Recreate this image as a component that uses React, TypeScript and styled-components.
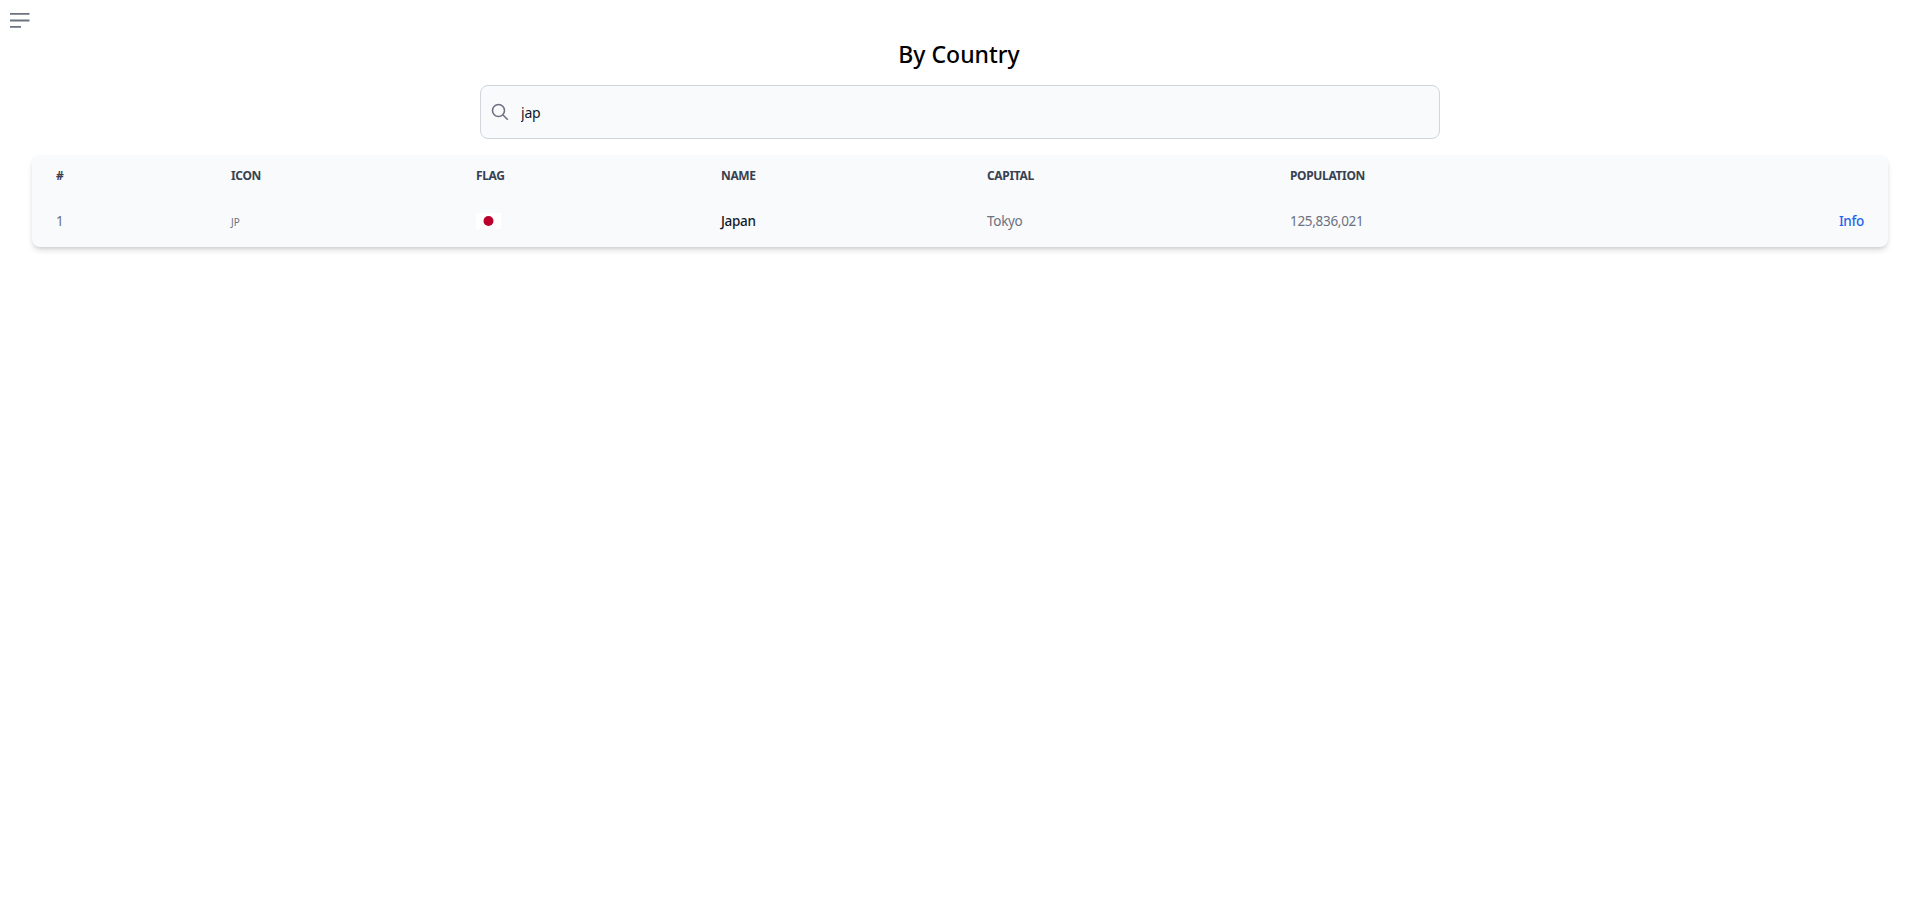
import React from "react";
import styled, { createGlobalStyle } from "styled-components";

const Global = createGlobalStyle`
  html, body { margin: 0; padding: 0; background: #fff; }
  body { font-family: "Noto Sans", "Open Sans", "Liberation Sans", sans-serif; }
  * { box-sizing: border-box; }
`;

const Page = styled.div`
  min-height: 908px;
  display: flex;
  flex-direction: column;
  padding-bottom: 20px;
`;

const MenuButton = styled.button`
  display: block;
  width: 40px;
  height: 30px;
  padding: 6px 8px 0 8px;
  margin: 0;
  border: 0;
  background: transparent;
  color: #6b7280;
  line-height: 0;
  align-self: flex-start;
`;

const Title = styled.h1`
  margin: 8px 0 0;
  height: 33px;
  font-size: 23px;
  line-height: 32px;
  font-weight: 500;
  color: #000;
  text-align: center;
`;

const SearchBar = styled.label`
  display: flex;
  align-items: center;
  gap: 12px;
  width: 960px;
  height: 54px;
  margin: 14px 0 0 480px;
  padding-left: 10px;
  border: 1px solid #d1d5db;
  border-radius: 8px;
  background: #f9fafb;
  color: #6b7280;
`;

const SearchInput = styled.input`
  flex: 1;
  border: 0;
  outline: 0;
  padding: 0;
  background: transparent;
  font: inherit;
  font-size: 14px;
  letter-spacing: -0.2px;
  color: #111827;
`;

const Card = styled.div`
  margin: 16px 30px 0 32px;
  border-radius: 8px;
  background: #f9fafb;
  box-shadow: 0 4px 6px -1px rgba(0, 0, 0, 0.14), 0 2px 4px -2px rgba(0, 0, 0, 0.14);
  overflow: hidden;
`;

const Table = styled.table`
  width: 100%;
  border-collapse: collapse;
  table-layout: fixed;
  font-size: 13.5px;
  letter-spacing: -0.3px;
  color: #6b7280;
`;

const HeadCell = styled.th`
  height: 41px;
  padding: 0 24px;
  text-align: left;
  font-size: 12px;
  font-weight: 700;
  letter-spacing: -0.35px;
  text-transform: uppercase;
  color: #374151;
`;

const Cell = styled.td`
  height: 51px;
  padding: 0 24px 1px;
  white-space: nowrap;
`;

const CodeCell = styled(Cell)`
  padding-bottom: 0;
  font-size: 10px;
  letter-spacing: 0;
`;

const NameCell = styled(Cell)`
  font-weight: 500;
  color: #111827;
`;

const ActionCell = styled(Cell)`
  text-align: right;
`;

const InfoLink = styled.a`
  font-weight: 500;
  color: #2563eb;
  text-decoration: none;
`;

const FlagIcon = styled.svg`
  display: block;
  width: 25px;
  height: 16px;
`;

const columns = [175, 245, 245, 266, 303, 500];
const headers = ["#", "Icon", "Flag", "Name", "Capital", "Population", ""];

export default function App() {
  return (
    <Page>
      <Global />
      <MenuButton aria-label="Menu">
        <svg width="24" height="20" viewBox="0 0 24 20" fill="none" stroke="currentColor" strokeWidth="1.8">
          <path d="M2 5.8h19.5M2 12.5h19.5M2 18.9h11" />
        </svg>
      </MenuButton>
      <Title>By Country</Title>
      <SearchBar>
        <svg width="18" height="18" viewBox="0 0 18 18" fill="none" stroke="currentColor" strokeWidth="1.6">
          <circle cx="7.5" cy="7.5" r="6" />
          <path d="M12 12l4.8 4.8" />
        </svg>
        <SearchInput defaultValue="jap" />
      </SearchBar>
      <Card>
        <Table>
          <colgroup>
            {columns.map((w, i) => (
              <col key={i} width={w} />
            ))}
            <col />
          </colgroup>
          <thead>
            <tr>
              {headers.map((h, i) => (
                <HeadCell key={i}>{h}</HeadCell>
              ))}
            </tr>
          </thead>
          <tbody>
            <tr>
              <Cell>1</Cell>
              <CodeCell>JP</CodeCell>
              <Cell>
                <FlagIcon viewBox="0 0 25 16">
                  <rect width="25" height="16" fill="#fff" />
                  <circle cx="12.5" cy="8" r="5" fill="#bc002d" />
                </FlagIcon>
              </Cell>
              <NameCell>Japan</NameCell>
              <Cell>Tokyo</Cell>
              <Cell>125,836,021</Cell>
              <ActionCell>
                <InfoLink href="#">Info</InfoLink>
              </ActionCell>
            </tr>
          </tbody>
        </Table>
      </Card>
    </Page>
  );
}
